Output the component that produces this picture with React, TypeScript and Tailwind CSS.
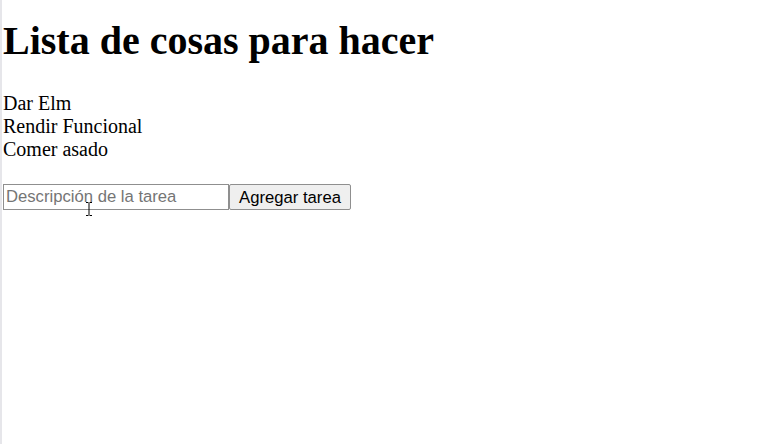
const tareas = ["Dar Elm", "Rendir Funcional", "Comer asado"];

export default function App() {
  return (
    <div className="relative flex min-h-[444px] bg-white text-black">
      <div className="w-[2px] shrink-0 bg-[#e6e6ea]" />
      <div className="pl-[1px] font-['Liberation_Serif',serif]">
        <h1 className="mt-[18px] mb-[28px] text-[40px] font-bold leading-[46px]">
          Lista de cosas para hacer
        </h1>
        <div className="text-[20px] leading-[23px]">
          {tareas.map((t) => (
            <div key={t}>{t}</div>
          ))}
        </div>
        <form
          className="mt-[23px] flex font-['Liberation_Sans',Arial,sans-serif]"
          onSubmit={(e) => e.preventDefault()}
        >
          <input
            type="text"
            placeholder="Descripción de la tarea"
            className="h-[26px] w-[226px] border border-[#8f8f8f] px-[2px] text-[16.67px] placeholder:text-[#757575] outline-none"
          />
          <button
            type="submit"
            className="h-[26px] w-[122px] rounded-[2px] border border-[#8f8f8f] bg-[#efefef] text-[16.67px] text-black"
          >
            Agregar tarea
          </button>
        </form>
      </div>
      {/* text cursor over the input */}
      <svg
        className="absolute left-[85px] top-[201px]"
        width="8"
        height="16"
        viewBox="0 0 8 16"
      >
        <path
          d="M1 1.5h2.5M4.5 1.5H7M4 2v12M1 14.5h2.5M4.5 14.5H7"
          stroke="#000"
          strokeWidth="1"
          fill="none"
        />
      </svg>
    </div>
  );
}
